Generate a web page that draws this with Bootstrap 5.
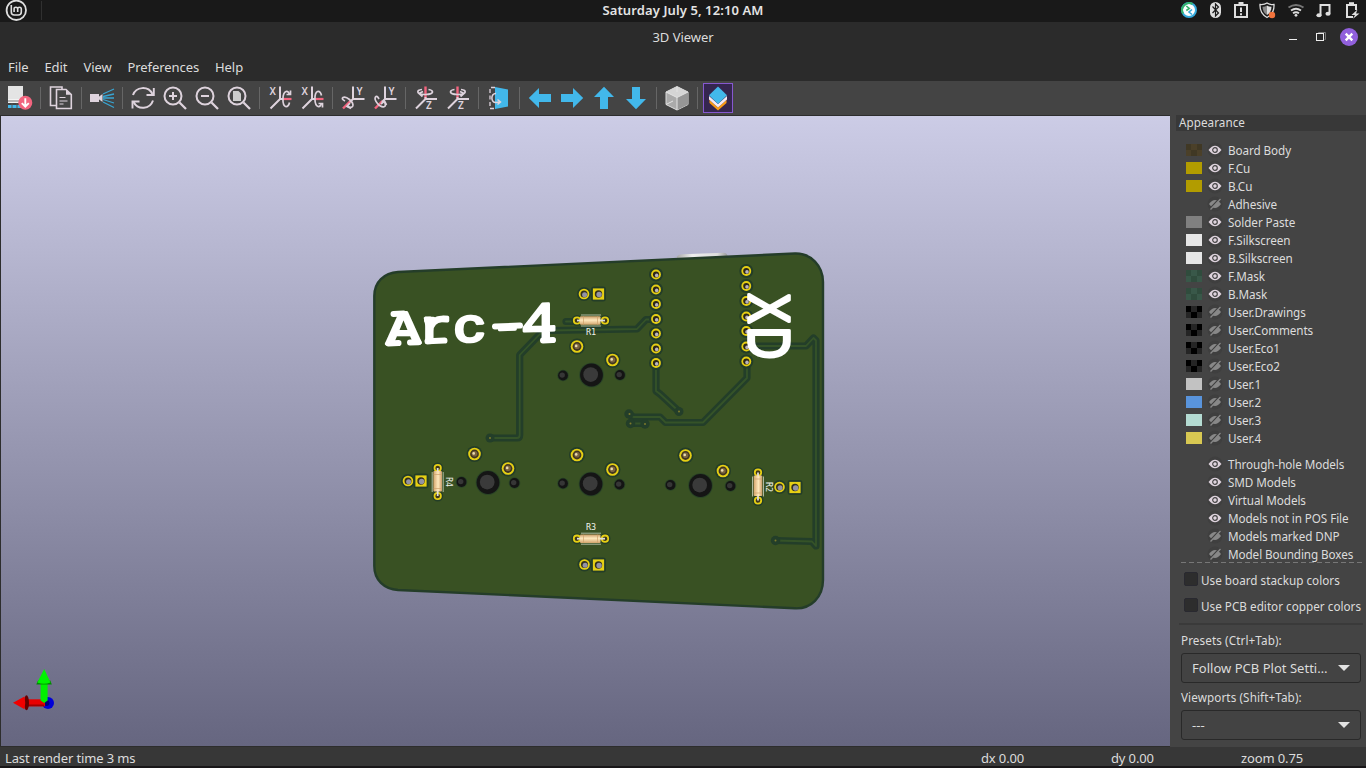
<!DOCTYPE html>
<html lang="en">
<head>
<meta charset="utf-8">
<title>3D Viewer</title>
<link href="https://cdn.jsdelivr.net/npm/bootstrap@5.3.0/dist/css/bootstrap.min.css" rel="stylesheet">
<style>
html,body{height:100%;overflow:hidden}
body{background:#2b2b2b;color:#dcdcdc;font-family:"Noto Sans","Open Sans",sans-serif;font-size:13px;line-height:18px}
svg{display:block;flex:none}
.desk-panel{height:22px;background:#191919;color:#e4e4e4}
.desk-clock{font-size:13px;font-weight:600;letter-spacing:.1px;line-height:20px}
.panel-side{width:400px}
.mint-logo{margin-left:5px}
.mint-sep{width:1px;height:19px;background:#303030;margin-left:14px}
.tray{width:183px;height:21px;margin-right:5px}
.title-row{height:31px;background:#2b2b2b}
.title-row .side{width:100px}
.win-title{font-size:13px;letter-spacing:-.05px;padding-bottom:2px}
.menu-row{height:28px;padding-left:8px;gap:16px;background:#2b2b2b;font-size:13px;letter-spacing:-.08px}
.menu-row a{color:#dcdcdc;text-decoration:none;white-space:nowrap}
.tool-row{height:34px;background:#444;padding-left:4.8px;gap:2px}
.tool-btn{width:30px;height:30px;padding:0;border:0;background:none;border-radius:0;display:flex;align-items:center;justify-content:center;flex:none}
.tool-btn.on{background:#35264f;border:1px solid #8658d0}
.tool-sep{width:1px;height:22px;background:#666;margin:0 3px;flex:none}
.work{height:632px;background:#303030}
.view{width:1170px;padding:1px 0 1px 1px;background:#2d2d2d}
.side-panel{background:#444;padding-left:6px}
.pane-title{height:16px;background:#383838;padding-left:3px;font-size:11.7px;line-height:14px;letter-spacing:.04px}
.layer-list{margin-top:10px;font-size:11.7px}
.layer-item{height:18px;padding-left:10px;white-space:nowrap;letter-spacing:-.08px}
.swatch{width:16px;height:12px;flex:none}
.chk{background-image:conic-gradient(var(--b) 25%,var(--a) 0 50%,var(--b) 0 75%,var(--a) 0);background-size:12px 12px;background-position:5px 0}
.eye{margin:0 5px 0 5px}
.dash{margin:-1px 4px 0 5px;height:1px;background:repeating-linear-gradient(90deg,#777 0 5px,#444 5px 8px)}
.opt-list{padding-top:4px}
.opt-row{height:26px;padding-left:8px;font-size:11.7px;line-height:16px;padding-bottom:1px;letter-spacing:.02px;white-space:nowrap}
.opt-box{width:14px;height:14px;background:#2d2d2d;border:1px solid #292930;border-radius:2px;margin:-1px 3px 0 0}
.rule{height:2px;background:#3a3a3a;margin:4px 3px 0}
.field-label{padding:6px 0 3px 5px;font-size:11.7px;letter-spacing:.1px;line-height:17px;margin-bottom:1px}
.field-label.first{padding-top:7px}
.combo{height:30px;margin:0 5px;border:1px solid #292929;border-radius:3px;padding:0 10px;background:#434343;font-size:13px;letter-spacing:.02px;width:180px}
.status{height:19px;background:#373737;font-size:13px;letter-spacing:-.13px;padding-top:2px}
.foot{height:2px;background:#191719}
</style>
</head>
<body class="d-flex flex-column">
<header class="desk-panel d-flex align-items-start justify-content-between flex-shrink-0">
  <div class="panel-side d-flex align-items-center">
    <svg class="mint-logo" width="22" height="21" viewBox="0 0 22 21" fill="none" stroke="#dedede"><circle cx="11.3" cy="10.3" r="9.7" stroke-width="1.8"/><path d="M6.300 5v7q0 3 3 3h4q3 0 3-3V9q0-1.800-1.800-1.800T12.700 9v3M12.700 9q0-1.800-1.800-1.800T9.100 9v3" stroke-width="1.600"/></svg>
    <div class="mint-sep"></div>
  </div>
  <div class="desk-clock">Saturday July 5, 12:10 AM</div>
  <div class="panel-side d-flex justify-content-end">
    <svg class="tray" viewBox="1178 0 183 21" fill="none" stroke="#dedede">
      <circle cx="1189" cy="10" r="7" fill="#fff" stroke="#35a9dc" stroke-width="2"/><path d="M1183 13.500A7 7 0 0 1 1192.500 4" stroke="#35b36b" stroke-width="2"/><path d="M1186.300 6l3 2.500-3 2" stroke="#35b36b" stroke-width="1.600"/><path d="M1192 9.500l-3 2.500 3 2.500" stroke="#35a9dc" stroke-width="1.600"/>
      <rect x="1210" y="2" width="11" height="16" rx="5.500" fill="#dedede" stroke="none"/><path d="M1212.500 6.500l6 6.500-3 3V4l3 3-6 6" stroke="#191919" stroke-width="1.200"/>
      <path d="M1235 5h12v12h-12z" stroke-width="2"/><path d="M1238.500 3.500h5" stroke-width="3"/><path d="M1241 7.500v4.500m0 1.300v2" stroke-width="2"/>
      <path d="M1267 3q3 2 7 1.500q.5 9-7 13q-7.500-4-7-13q4 .5 7-1.500z" stroke-width="1.300"/><path d="M1267 5.500q2 1.300 4.500 1.200q0 5.500-4.500 8.300z" fill="#dedede" stroke="none"/><path d="M1267 5.500q-2 1.300-4.500 1.200q0 5.500 4.500 8.300z" fill="#888" stroke="none"/><circle cx="1272" cy="15" r="3.200" fill="#f3743d" stroke="none"/>
      <path d="M1288.500 7.500q7.500-5 15 0" stroke="#777" stroke-width="1.900"/><path d="M1291 10.500q5-3.500 10 0M1293 13.300q3-2 6 0" stroke-width="1.900"/><circle cx="1296" cy="15.300" r="1.400" fill="#dedede" stroke="none"/>
      <path d="M1320.500 15V5h9v8.500" stroke-width="2"/><ellipse cx="1319" cy="15.300" rx="2.600" ry="2" fill="#dedede" stroke="none"/><ellipse cx="1328" cy="13.800" rx="2.600" ry="2" fill="#dedede" stroke="none"/>
      <path d="M1353 17h-6V5h9v5" stroke-width="2"/><path d="M1349 3.500h5" stroke-width="2.600"/><path d="M1357.500 9.500l-6 5.500h3.500l-2 3.700 6.500-5.300h-3.500z" fill="#dedede" stroke="none"/>
    </svg>
  </div>
</header>
<div class="title-row d-flex align-items-center justify-content-between flex-shrink-0">
  <div class="side"></div><div class="win-title">3D Viewer</div>
  <div class="side d-flex justify-content-end"><svg width="84" height="21" viewBox="1282 27 84 21" fill="none"><path d="M1289 39.500h8" stroke="#eee"/><path d="M1318.500 33.500v-1h7v7h-1" stroke="#777"/><rect x="1316.500" y="33.500" width="7" height="7" stroke="#eee"/><circle cx="1349" cy="37" r="9" fill="#9160dc"/><path d="M1345.700 33.700l6.600 6.600m0-6.600l-6.600 6.600" stroke="#fff" stroke-width="2.400"/></svg></div>
</div>
<nav class="menu-row d-flex align-items-center flex-shrink-0"><a href="#">File</a><a href="#">Edit</a><a href="#">View</a><a href="#">Preferences</a><a href="#">Help</a></nav>
<div class="tool-row d-flex align-items-center flex-shrink-0" id="tools"></div>

<main class="work d-flex flex-shrink-0">
  <div class="view flex-shrink-0">
  <svg width="1169" height="630" viewBox="1 116 1169 630">
    <defs>
      <linearGradient id="sky" x2="0" y2="1"><stop stop-color="#cccce6"/><stop offset="1" stop-color="#666680"/></linearGradient>
      <linearGradient id="resH" x2="0" y2="1"><stop stop-color="#c99a66"/><stop offset=".45" stop-color="#ffe9bd"/><stop offset="1" stop-color="#d3a56d"/></linearGradient>
      <linearGradient id="usb" x2="1" y2="0"><stop stop-color="#aaa"/><stop offset=".3" stop-color="#eee"/><stop offset=".8" stop-color="#ddd"/><stop offset="1" stop-color="#999"/></linearGradient>
      <g id="pin"><circle r="7" fill="#233d28"/><circle r="4.900" fill="#e6cf14"/><circle r="3.100" fill="#2d2618"/><circle cx=".7" cy=".9" r="1.800" fill="#b9b4bd"/></g>
      <g id="padR"><circle r="7" fill="#233d28"/><circle r="5.300" fill="#e6cf14"/><circle r="3.500" fill="#33301f"/><circle cx=".6" cy=".7" r="2.500" fill="#9392a4"/></g>
      <g id="padS"><rect x="-7.500" y="-7.500" width="15" height="15" rx="3" fill="#233d28"/><rect x="-5.600" y="-5.600" width="11.200" height="11.200" fill="#e6cf14"/><circle r="3.700" fill="#33301f"/><circle cx=".6" cy=".5" r="2.700" fill="#9392a4"/></g>
      <g id="leg"><circle r="8" fill="#233d28"/><circle r="6.300" fill="#e6cf14"/><circle r="4.400" fill="#403522"/><circle cx="0" cy="-.2" r="2.800" fill="#7c6540"/><circle cx="-.8" cy="-.6" r="1.300" fill="#eadbb0"/></g>
      <g id="post"><circle r="12.300" fill="#294327"/><circle r="11.400" fill="#151515"/><circle cx="-.8" cy="-.4" r="7.400" fill="#3a3a3a"/></g>
      <g id="peg"><circle r="5.800" fill="#294327"/><circle r="4.900" fill="#141414"/><circle cx="-.8" cy="-.4" r="2.700" fill="#363636"/></g>
      <g id="resistor"><circle cx="-14" r="5.500" fill="#233d28"/><circle cx="14" r="5.500" fill="#233d28"/><circle cx="-14" r="3.200" fill="#40381a" stroke="#e6cf14" stroke-width="1.800"/><circle cx="14" r="3.200" fill="#40381a" stroke="#e6cf14" stroke-width="1.800"/><path d="M-14 0H14" stroke="#ddd" stroke-width="1.800"/><path d="M-10-5.500H10M-10 5.500H10" stroke="#c9d2c0" stroke-width=".8"/><rect x="-11" y="-4.300" width="20.500" height="8.600" rx="1" fill="url(#resH)"/><path d="M-7.500-4V4M6.500-4V4" stroke="#cfa06a" stroke-width=".7"/></g>
      <g id="routes">
        <path d="M490 438H517Q519.700 438 519.700 435V355L538 336Q544 330 550 330.500L637 329 646 319.500H656"/>
        <path d="M566 321.500H577M656 363V391L660 394 679 411.500"/>
        <path d="M629 414L633.500 417H660L665.500 422.500H703L747 378V362"/>
        <path d="M630 423.500H645M756 346H806L813.500 338 816 340.500V546L812 541.500 776 540.500"/>
      </g>
    </defs>
    <rect x="1" y="116" width="1169" height="630" fill="url(#sky)"/>
    <path d="M677 260V256.500q1-2 6-2.300l40-1.500q4 0 4.500 3v3z" fill="url(#usb)"/>
    <path d="M398 272L795 253.500C811 253 823 266 823 282V580C823 597 811 609 795 608.300L398 590C384 589 374.300 580 374.300 566V296C374.300 282 384 273 398 272Z" fill="#395123" stroke="#243d29" stroke-width="2.400"/>
    <g fill="none" stroke-linejoin="round" stroke-linecap="round">
      <use href="#routes" stroke="#233e29" stroke-width="7.200"/><use href="#routes" stroke="#355328" stroke-width="1.800"/>
      <g fill="#233e29"><circle cx="490" cy="438" r="4.500"/><circle cx="679" cy="411.500" r="4.500"/><circle cx="629" cy="414" r="4.700"/><circle cx="630.500" cy="423.500" r="4.700"/><circle cx="645" cy="424" r="4.700"/><circle cx="775.500" cy="540.500" r="4.700"/></g>
      <g fill="#7d7a2b"><circle cx="490" cy="438" r="1"/><circle cx="679" cy="411.500" r="1"/><circle cx="629.500" cy="414" r="1"/><circle cx="630.500" cy="423.500" r="1"/><circle cx="645" cy="424" r="1"/><circle cx="775.500" cy="540.500" r="1"/></g>
    </g>
    <g id="parts"></g>
    <g fill="#fff" stroke="#fff" stroke-linejoin="round">
      <text transform="matrix(1.200 -.036 0 1 384 344)" font-family="Liberation Mono" font-size="47" stroke-width="2.800" x="2 29 57.500 88.700">Arc-</text>
      <text transform="matrix(1.120 -.036 0 1 384 344)" font-family="Liberation Mono" font-size="53" stroke-width="2.800" x="122.500">4</text>
      <path d="M388.500 343.500l10-.4M410 342.500l8.500-.3M393.500 314l10-.4M427.500 341.200l17-.6M427 320l6-.3M495 326.500l25-.9M543 340.500l10-.4" stroke-width="6" stroke-linecap="round"/>
      <text transform="translate(748.500 294) rotate(90) scale(.79 1)" font-family="Liberation Sans" font-size="57" stroke-width="3.600"><tspan x="-.5">X</tspan><tspan x="41.500">D</tspan></text>
    </g>
    <g fill="#eef0ea" font-family="DejaVu Sans Mono" font-size="8.500" text-anchor="middle">
      <text x="591" y="335">R1</text><text x="591" y="530">R3</text>
      <text transform="translate(445.500 482) rotate(90)" font-size="8">R4</text><text transform="translate(766 487) rotate(90)">R2</text>
    </g>
    <g><circle cx="48" cy="703" r="6" fill="#0000d8"/><circle cx="46.500" cy="703" r="3" fill="#00007a"/>
      <rect x="26" y="699.300" width="19" height="7" fill="#e80000"/><path d="M26 704.500h18v1.800H26z" fill="#a00000"/><ellipse cx="26.500" cy="702.800" rx="2.500" ry="7.500" fill="#650000"/><path d="M13 702.800L24.500 696.500Q26 702.800 24.500 709.200z" fill="#f00000"/>
      <path d="M40.600 683h7v17.500l-3.500 2.500-3.500-2.500z" fill="#00f000"/><path d="M36.300 684.500h15.500l-1.500-4H38z" fill="#008a00"/><path d="M44.200 669L50.500 682.500Q44 685 37.300 682.500z" fill="#00f400"/></g>
  </svg>
  </div>
  <aside class="side-panel flex-grow-1">
    <div class="pane-title">Appearance</div>
    <div class="layer-list" id="layers"></div>
    <div class="dash"></div>
    <div class="opt-list"><div class="opt-row d-flex align-items-center"><span class="opt-box"></span>Use board stackup colors</div>
    <div class="opt-row d-flex align-items-center"><span class="opt-box"></span>Use PCB editor copper colors</div></div>
    <div class="rule"></div>
    <div class="field-label first">Presets (Ctrl+Tab):</div>
    <div class="combo d-flex align-items-center justify-content-between"><span>Follow PCB Plot Setti…</span><svg width="12" height="6"><path d="M0 0h12L6 6z" fill="#e2e2e2"/></svg></div>
    <div class="field-label">Viewports (Shift+Tab):</div>
    <div class="combo d-flex align-items-center justify-content-between"><span>---</span><svg width="12" height="6"><path d="M0 0h12L6 6z" fill="#e2e2e2"/></svg></div>
  </aside>
</main>
<footer class="status d-flex align-items-center flex-shrink-0"><div style="width:976px;padding-left:5px">Last render time 3 ms</div><div style="width:130px;padding-left:5px">dx 0.00</div><div style="width:130px;padding-left:5px">dy 0.00</div><div style="padding-left:5px">zoom 0.75</div></footer>
<div class="foot flex-shrink-0"></div>

<script>
// Toolbar glyphs on a 26x26 grid; null is a separator
const W='#ded3dd', P='#f2647e', B='#42b8eb';
const lens = inner => `<circle cx="11" cy="11" r="8.500" fill="none" stroke="${W}" stroke-width="2"/><path d="M17.500 17.500l6.500 6.500" stroke="${W}" stroke-width="2.300"/>${inner}`;
const flip = (m,s) => m ? `<g transform="translate(${s} 0) scale(-1 1)">` : '<g>';
const letter = (x,y,c) => `<text x="${x}" y="${y}" font-size="10" font-weight="600" fill="${W}">${c}</text>`;
const rotX = r => `${letter(2.5,9.500,'X')}<path d="M13 1.500V14L3.500 23.500M13 14h5" stroke="${W}" stroke-width="2" fill="none"/><path d="M16 14h8.500" stroke="${P}" stroke-width="2.200"/><g fill="none" stroke="${W}" stroke-width="1.700" ${r?'transform="matrix(1 0 0 -1 0 28)"':''}><path d="M22.500 9.500Q21.500 6 19 6.500C15 8 15 20 18.500 21.500q3 .5 4-4"/><path d="M19.500 9.500h4V5.500"/></g>`;
const rotY = r => `<path d="M3 23.500L10.500 16" stroke="${P}" stroke-width="2.400"/><path d="M13 1.500V14H24.500M13 14l-3 3" stroke="${W}" stroke-width="2" fill="none"/>${letter(16.500,9.500,'Y')}<g fill="none" stroke="${W}" stroke-width="1.700" ${r?'transform="matrix(0 1 1 0 -9 9)"':''}><path d="M5 16Q1 14 3 12.500C6 10.500 14 17 12.800 21q-1 2.500-5 .5"/><path d="M11 23.500l-4-2 3-3.500"/></g>`;
const rotZ = r => `<path d="M12.500 1.500V14" stroke="${P}" stroke-width="2.400"/><path d="M12.500 12v2H24M12.500 14L3 23.500" stroke="${W}" stroke-width="2" fill="none"/>${letter(13,24,'Z')}${flip(r,25)}<path d="M9 4.500Q4 5 5 7.500C7 10.500 19 10 19.500 7q0-2-4-2.500M9.500 11.500l-3.500-3 4-2" fill="none" stroke="${W}" stroke-width="1.700"/></g>`;
const arrow = d => `<path transform="rotate(${d} 13 13)" d="M1.800 13L12 3v6h12v8H12v6z" fill="${B}"/>`;
const icons = [
 `<path d="M1 1h15v13H1z" fill="#e4e4e4"/><path d="M1 14h15v4H1z" fill="#f3f3f3"/><path d="M1 16h12" stroke="#777"/><path d="M1 21.500h13" stroke="${B}" stroke-width="3"/><path d="M5 18v5M10 18v5" stroke="#555"/><circle cx="18.300" cy="17.700" r="7" fill="${P}"/><path d="M18.300 13.200v8m-3.500-3l3.500 3.500 3.500-3.500" fill="none" stroke="#fff" stroke-width="1.900"/>`, null,
 `<path d="M8 20.500H2.500V2h11.500v2" fill="none" stroke="${W}" stroke-width="1.600"/><path d="M8.500 4.500h9.500l5.300 5V23.500H8.500z" fill="#444" stroke="${W}" stroke-width="1.600"/><path d="M18 4.500v5.300h5.300z" fill="${W}"/><path d="M11.500 12.500h6M11.500 16h8M11.500 19h4" stroke="${W}" stroke-width="1.200"/>`, null,
 `<path d="M1 9h9v8H1zM9.500 12l4-3v8l-4-3z" fill="${W}"/><path d="M14 9L25 4M14 11.500L25 9M14 13h11M14 14.500L25 18M14 17L25 22.500" stroke="#38a5d3" stroke-width="1.300"/>`, null,
 `<path d="M3 10C6 1.500 18 .5 22.500 9M23 15.500C20 24.500 8 25.500 3.500 17" fill="none" stroke="${W}" stroke-width="2"/><path d="M16.500 10H23.800V3M9.500 16.500H2.500V23.500" fill="none" stroke="${W}" stroke-width="1.900"/>`,
 lens(`<path d="M7 11h8M11 7v8" stroke="${W}" stroke-width="2"/>`), lens(`<path d="M7 11h8" stroke="${W}" stroke-width="2"/>`),
 lens(`<path d="M7 6h5.500L15 8.500V16H7z" fill="#ccc"/>`), null,
 rotX(0), rotX(1), null, rotY(0), rotY(1), null, rotZ(0), rotZ(1), null,
 `<path d="M9 2.500H4V23.500h5" fill="none" stroke="${W}" stroke-width="1.300" stroke-dasharray="4 2.500"/><path d="M9 2l13 2.500v17L9 24z" fill="${B}"/><path d="M10 8.500C4.500 8 4.500 18 10 17.500l4-.5m-2.500-2.500l3 2.500-3 2.500" fill="none" stroke="${W}" stroke-width="1.500"/>`, null,
 arrow(0), arrow(180), arrow(90), arrow(270), null,
 `<path d="M13 1.500L24 7v12.500L13 25 2 19.500V7z" fill="#aaa" stroke="#ddd"/><path d="M13 1.500L24 7 13 12.500 2 7z" fill="#d5d5d5"/><path d="M13 12.500L24 7v12.500L13 25z" fill="#969696"/><path d="M2 7l11 5.500L24 7M13 12.500V25M2 19.500l7-3.500M13 2v5" fill="none" stroke="#e3e3e3"/>`, null,
 `<path d="M4.500 15l8.500 7.500L21.500 15v3L13 25.500 4.500 18z" fill="#f89a13"/><path d="M4 11l9 8 9-8v3.500l-9 8-9-8z" fill="#f5e9f2"/><path d="M13 1.500L22 10.300 13 19 4 10.300z" fill="${B}"/>`
];
document.getElementById('tools').innerHTML = icons.map((p,i)=> p===null ? '<span class="tool-sep"></span>' :
 `<button class="tool-btn ${i===icons.length-1?'on':''}"><svg width="26" height="26" viewBox="0 0 26 26">${p}</svg></button>`).join('');

// Appearance rows: name, visible, colour, second checker colour
const eye = on => on
 ? `<svg class="eye" width="16" height="16"><circle cx="8" cy="8" r="7.500" fill="#3f3f3f"/><path d="M1.500 8Q8-.5 14.500 8 8 16.500 1.500 8z" fill="${W}"/><circle cx="8" cy="8" r="2.300" fill="${W}" stroke="#444" stroke-width="1.200"/></svg>`
 : `<svg class="eye" width="16" height="16"><circle cx="8" cy="8" r="7.500" fill="#3f3f3f"/><path d="M2 8Q8 0 14 8 8 16 2 8z" fill="#888"/><path d="M2.500 13L12.500 2.500" stroke="#404040" stroke-width="1.500"/><path d="M3.500 13.500L13.500 3" stroke="#888" stroke-width="1.300"/></svg>`;
const rows = [['Board Body',1,'#4b4029','#403824'],['F.Cu',1,'#b29c00'],['B.Cu',1,'#b29c00'],['Adhesive',0],['Solder Paste',1,'#808080'],['F.Silkscreen',1,'#e6e6e6'],['B.Silkscreen',1,'#e6e6e6'],['F.Mask',1,'#395849','#304c3d'],['B.Mask',1,'#395849','#304c3d'],['User.Drawings',0,'#252525','#000'],['User.Comments',0,'#252525','#000'],['User.Eco1',0,'#252525','#000'],['User.Eco2',0,'#252525','#000'],['User.1',0,'#c2c2c2'],['User.2',0,'#5994dc'],['User.3',0,'#b4dbd2'],['User.4',0,'#d8c852'],0,['Through-hole Models',1],['SMD Models',1],['Virtual Models',1],['Models not in POS File',1],['Models marked DNP',0],['Model Bounding Boxes',0]];
document.getElementById('layers').innerHTML = rows.map(r => !r ? '<div class="pt-2"></div>' :
 `<div class="layer-item d-flex align-items-center"><span class="swatch ${r[3]?'chk':''}" style="${r[3]?`--a:${r[2]};--b:${r[3]}`:`background:${r[2]||'none'}`}"></span>${eye(r[1])}<span>${r[0]}</span></div>`).join('');

// Board parts by symbol
const parts = {
 pin:[[656,274.5],[656,289.5],[656,304],[656,319],[656,333.5],[656,348.5],[656,363],[746.3,271],[746.3,286],[746.3,301],[746.3,316.5],[746.3,331],[746.3,346.5],[746.3,361.5]],
 padR:[[584,294],[408,481],[779.5,487],[584.5,564.5]],
 padS:[[598.5,294],[421,481],[795,487.5],[598.5,565]],
 leg:[[577,346.5],[612.5,360],[474.5,454],[508,468.5],[577,455],[612.5,469.5],[685.5,455.5],[723,471]],
 post:[[591.5,375],[488,482.5],[591,484],[700.5,485.5]],
 peg:[[563,375.5],[620,375],[461.5,482],[514.5,483],[563,483.5],[619.5,484.5],[670.5,485],[730.5,486]],
 resistor:[[591,320.5],[591,538.7],[437.7,482,90],[758,486.5,90]]
};
document.getElementById('parts').innerHTML = Object.entries(parts).map(([k,a])=>a.map(([x,y,r])=>`<use href="#${k}" transform="translate(${x} ${y}) rotate(${r||0})"/>`).join('')).join('');
</script>
<script src="https://cdn.jsdelivr.net/npm/bootstrap@5.3.0/dist/js/bootstrap.bundle.min.js"></script>
</body>
</html>
